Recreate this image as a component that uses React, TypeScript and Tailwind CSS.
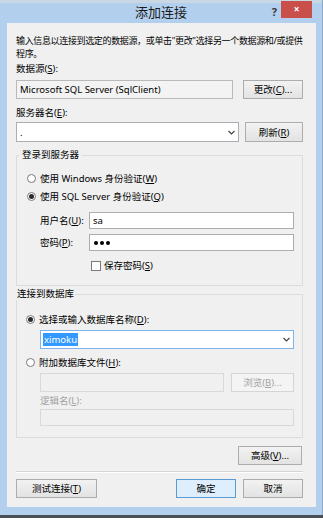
import React from "react";

const font = { fontFamily: '"Noto Sans", "Noto Sans CJK SC", sans-serif' };

const Radio = ({ checked }: { checked?: boolean }) => (
  <span className="flex h-[9px] w-[9px] shrink-0 items-center justify-center rounded-full border border-[#7a7a7a] bg-white">
    {checked && <span className="h-[5px] w-[5px] rounded-full bg-[#2a2a2a]" />}
  </span>
);

const Chevron = () => (
  <svg width="7" height="5" viewBox="0 0 7 5" className="shrink-0">
    <path d="M0.5 1 L3.5 4 L6.5 1" fill="none" stroke="#444" strokeWidth="1.2" />
  </svg>
);

const Btn = ({ children, w, disabled, primary }: { children: React.ReactNode; w: string; disabled?: boolean; primary?: boolean }) => (
  <div
    className={
      "flex h-[19px] items-center justify-center border text-[9.5px] " +
      w +
      (primary
        ? " border-[#5b9bd5] bg-[#dfeefc] text-black"
        : disabled
        ? " border-[#d5d5d5] bg-[#f4f4f4] text-[#a3a3a3]"
        : " border-[#adadad] bg-gradient-to-b from-[#f2f2f2] to-[#e3e3e3] text-black")
    }
  >
    {children}
  </div>
);

export default function App() {
  return (
    <div className="flex h-[521px] w-[323px] flex-col bg-white text-black" style={font}>
      {/* frame */}
      <div className="flex h-[515px] flex-col bg-[#b2cfee] border-r border-[#8ea9c7]">
        {/* title bar */}
        <div className="relative h-[23px] shrink-0 border-t-[3px] border-[#c9d6e3]">
          <div className="flex h-[20px] items-center justify-center text-[13px] text-[#1a1a1a]">添加连接</div>
          <span className="absolute right-[45px] top-[1px] text-[11px] font-bold text-[#3a3a3a]">?</span>
          <div className="absolute right-[10px] top-[-2px] flex h-[17px] w-[31px] items-center justify-center bg-[#c9504a] text-[10px] font-bold text-white">
            ×
          </div>
        </div>
        {/* client */}
        <div className="mx-[7px] mr-[6px] flex h-[484px] flex-col bg-[#f0f0f0] pl-[9px] pr-[13px] text-[9.5px] leading-[13px]">
          <p className="mt-[11px] whitespace-nowrap text-[9px] tracking-[-0.35px]">
            输入信息以连接到选定的数据源，或单击"更改"选择另一个数据源和/或提供
            <br />
            程序。
          </p>
          <div className="mt-[3px] leading-[12px]">
            数据源(<u>S</u>):
          </div>
          <div className="mt-[5px] flex h-[19px]">
            <div className="flex w-[217px] items-center border border-[#b9b9b9] bg-[#f3f3f3] pl-[3px]">
              Microsoft SQL Server (SqlClient)
            </div>
            <Btn w="ml-auto w-[60px]">
              更改(<u>C</u>)...
            </Btn>
          </div>
          <div className="mt-[8px] leading-[12px]">
            服务器名(<u>E</u>):
          </div>
          <div className="mt-[3px] flex h-[20px]">
            <div className="flex w-[223px] items-center border border-[#abadb3] bg-white pl-[3px] pr-[3px]">
              <span className="flex-1">.</span>
              <Chevron />
            </div>
            <Btn w="ml-auto h-[20px] w-[58px]">
              刷新(<u>R</u>)
            </Btn>
          </div>

          {/* group: login */}
          <fieldset className="mt-[7px] h-[137px] border border-[#dcdcdc]">
            <legend className="ml-[2px] px-[3px] leading-[12px]">登录到服务器</legend>
            <div className="pl-[10px] pr-[8px]">
              <div className="mt-[11px] flex items-center gap-[4px]">
                <Radio />
                <span>使用 Windows 身份验证(<u>W</u>)</span>
              </div>
              <div className="mt-[5px] flex items-center gap-[4px]">
                <Radio checked />
                <span>使用 SQL Server 身份验证(<u>Q</u>)</span>
              </div>
              <div className="mt-[9px] flex items-center pl-[13px]">
                <span className="w-[49px]">用户名(<u>U</u>):</span>
                <div className="flex h-[17px] flex-1 items-center border border-[#abadb3] bg-white pl-[3px]">sa</div>
              </div>
              <div className="mt-[5px] flex items-center pl-[13px]">
                <span className="w-[49px]">密码(<u>P</u>):</span>
                <div className="flex h-[17px] flex-1 items-center gap-[2px] border border-[#abadb3] bg-white pl-[4px]">
                  <span className="h-[4px] w-[4px] rounded-full bg-black" />
                  <span className="h-[4px] w-[4px] rounded-full bg-black" />
                  <span className="h-[4px] w-[4px] rounded-full bg-black" />
                </div>
              </div>
              <div className="mt-[8px] flex items-center gap-[3px] pl-[64px]">
                <span className="h-[10px] w-[10px] border border-[#7a7a7a] bg-white" />
                <span>保存密码(<u>S</u>)</span>
              </div>
            </div>
          </fieldset>

          {/* group: database */}
          <fieldset className="mt-[2px] h-[150px] border border-[#dcdcdc]">
            <legend className="-ml-[1px] px-[1px] leading-[12px]">连接到数据库</legend>
            <div className="pl-[9px] pr-[8px]">
              <div className="mt-[13px] flex items-center gap-[4px]">
                <Radio checked />
                <span>选择或输入数据库名称(<u>D</u>):</span>
              </div>
              <div className="ml-[14px] mt-[4px] flex h-[19px] items-center border border-[#7eb4ea] bg-white pl-[2px] pr-[3px]">
                <span className="flex-1">
                  <span className="bg-[#3399ff] px-[1px] text-white">ximoku</span>
                </span>
                <Chevron />
              </div>
              <div className="mt-[7px] flex items-center gap-[4px]">
                <Radio />
                <span>附加数据库文件(<u>H</u>):</span>
              </div>
              <div className="ml-[14px] mt-[4px] flex h-[19px]">
                <div className="w-[184px] border border-[#d9d9d9] bg-[#f0f0f0]" />
                <Btn w="ml-auto w-[63px]" disabled>
                  浏览(<u>B</u>)...
                </Btn>
              </div>
              <div className="ml-[14px] mt-[3px] leading-[12px] text-[#a3a3a3]">
                逻辑名(<u>L</u>):
              </div>
              <div className="ml-[14px] mt-[2px] h-[17px] border border-[#d9d9d9] bg-[#f0f0f0]" />
            </div>
          </fieldset>

          <div className="mt-[8px] flex pr-[1px]">
            <Btn w="ml-auto w-[64px]">
              高级(<u>V</u>)...
            </Btn>
          </div>
          <div className="mt-[6px] h-[2px] border-t border-[#d5d5d5] border-b-white border-b" />
          <div className="mt-[6px] flex">
            <Btn w="w-[81px]">
              测试连接(<u>T</u>)
            </Btn>
            <Btn w="ml-auto w-[60px]" primary>
              确定
            </Btn>
            <Btn w="ml-[7px] w-[60px]">取消</Btn>
          </div>
        </div>
      </div>
      <div className="h-[3px] bg-[#4a4f55]" />
    </div>
  );
}
